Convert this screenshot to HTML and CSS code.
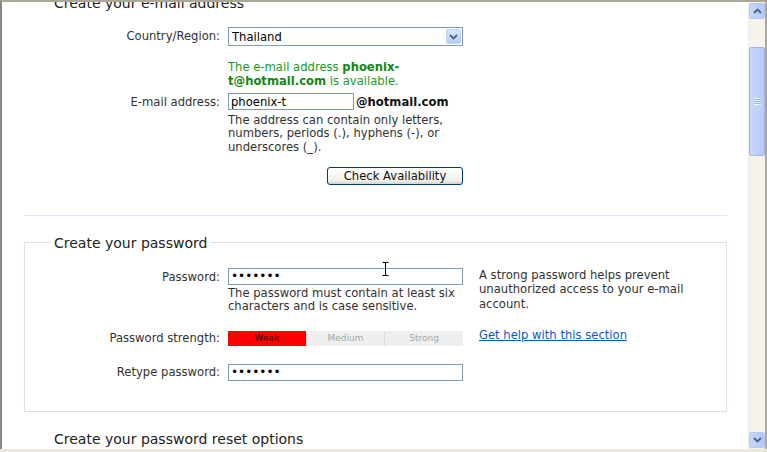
FILE: index.html
```html
<!DOCTYPE html>
<html lang="en">
<head>
  <meta charset="UTF-8">
  <title>Sign up</title>
  <link rel="stylesheet" href="styles.css">
</head>
<body>
  <div class="window">
    <div class="viewport">
      <div class="page">

        <h3 class="section-title">Create your e-mail address</h3>

        <div class="row row-country">
          <label>Country/Region:</label>
          <div class="select">
            <span class="select-value">Thailand</span>
            <span class="select-btn">
              <svg width="9" height="6" viewBox="0 0 9 6"><path d="M1 1 L4.5 4.5 L8 1" fill="none" stroke="#4d6185" stroke-width="1.8"/></svg>
            </span>
          </div>
        </div>

        <div class="row row-msg">
          <span></span>
          <p class="available">The e-mail address <b>phoenix-<br>t@hotmail.com</b> is available.</p>
        </div>

        <div class="row row-email">
          <label>E-mail address:</label>
          <div class="field">
            <div class="email-line">
              <input class="text short" type="text" value="phoenix-t">
              <b class="domain">@hotmail.com</b>
            </div>
            <p class="hint">The address can contain only letters,<br>numbers, periods (.), hyphens (-), or<br>underscores (_).</p>
          </div>
        </div>

        <div class="row row-check">
          <span></span>
          <div class="btn-wrap"><button class="xp-btn">Check Availability</button></div>
        </div>

        <hr class="sep">

        <fieldset class="box">
          <legend>Create your password</legend>

          <div class="row row-pass">
            <label>Password:</label>
            <div class="field">
              <input class="text" type="password" value="1234567">
              <p class="hint">The password must contain at least six<br>characters and is case sensitive.</p>
            </div>
            <p class="side">A strong password helps prevent<br>unauthorized access to your e-mail<br>account.</p>
          </div>

          <div class="row row-strength">
            <label>Password strength:</label>
            <div class="strength">
              <span class="weak">Weak</span>
              <span>Medium</span>
              <span>Strong</span>
            </div>
            <a class="side help" href="#">Get help with this section</a>
          </div>

          <div class="row row-retype">
            <label>Retype password:</label>
            <input class="text" type="password" value="1234567">
          </div>

          <svg class="ibeam" width="7" height="14" viewBox="0 0 7 14"><path d="M0.5 0.5 H6.5 M3.5 0.5 V13.5 M0.5 13.5 H6.5" fill="none" stroke="#000" stroke-width="1"/></svg>
        </fieldset>

        <h3 class="section-title last">Create your password reset options</h3>
      </div>
    </div>

    <div class="scrollbar">
      <div class="sb-btn">
        <svg width="9" height="6" viewBox="0 0 9 6"><path d="M1 5 L4.5 1.5 L8 5" fill="none" stroke="#4d6185" stroke-width="1.8"/></svg>
      </div>
      <div class="sb-track">
        <div class="sb-thumb"><span class="grip"></span></div>
      </div>
      <div class="sb-btn">
        <svg width="9" height="6" viewBox="0 0 9 6"><path d="M1 1 L4.5 4.5 L8 1" fill="none" stroke="#4d6185" stroke-width="1.8"/></svg>
      </div>
    </div>
  </div>
</body>
</html>
```

FILE: styles.css
```css
body {
  margin: 0;
  font-family: "DejaVu Sans", sans-serif;
  font-size: 11.6px;
  color: #333;
  background: #ece9d8;
}

.window {
  display: flex;
  height: 449px;
  border-top: 2px solid #aca899;
  border-left: 2px solid #8c8a80;
  border-right: 2px solid #aca899;
  box-sizing: border-box;
  overflow: hidden;
}

.viewport {
  flex: 1;
  background: white;
  overflow: hidden;
}

.page {
  margin-top: -8px;
  padding: 0 21px 0 22px;
}

.section-title {
  margin: 0;
  padding-left: 30px;
  font-size: 14px;
  font-weight: normal;
  color: #222;
  line-height: 18px;
}

.row {
  display: grid;
  grid-template-columns: 196px 235px 1fr;
  column-gap: 8px;
  align-items: start;
}

.row label {
  text-align: right;
  line-height: 18px;
  white-space: nowrap;
}

.row-country {
  margin-top: 15px;
}

.select {
  display: flex;
  align-items: center;
  height: 19px;
  border: 1px solid #7f9db9;
  box-sizing: border-box;
  padding-left: 3px;
}

.select-value {
  flex: 1;
  color: #000;
}

.select-btn {
  width: 15px;
  height: 15px;
  margin-right: 1px;
  display: flex;
  align-items: center;
  justify-content: center;
  background: linear-gradient(#dbe6fd, #b7cbf6);
  border-radius: 2px;
  border: 1px solid #c3d3fd;
  box-sizing: border-box;
}

.row-msg {
  margin-top: 14px;
}

.available {
  margin: 0;
  color: #229922;
  line-height: 14px;
}

.available b {
  color: #118811;
}

.row-email {
  margin-top: 5px;
}

.email-line {
  display: flex;
  align-items: center;
}

.domain {
  color: #111;
  margin-left: 2px;
}

.text {
  width: 235px;
  height: 17px;
  border: 1px solid #7f9db9;
  box-sizing: border-box;
  padding: 0 2px;
  font-family: inherit;
  font-size: 11.6px;
  color: #000;
  margin: 0;
  display: block;
}

.text.short {
  width: 126px;
}

input[type="password"] {
  font-size: 12px;
}

.hint {
  margin: 4px 0 0;
  line-height: 13.3px;
  color: #333;
  white-space: nowrap;
}

.row-check {
  margin-top: 13px;
}

.btn-wrap {
  display: flex;
  justify-content: flex-end;
}

.xp-btn {
  width: 136px;
  height: 18px;
  padding: 0;
  font-family: inherit;
  font-size: 11.6px;
  color: #111;
  border: 1px solid #003c74;
  border-radius: 3px;
  background: linear-gradient(#ffffff, #f0f0ea 80%, #d6d0c5);
}

.sep {
  margin: 30px 0 0;
  border: none;
  border-top: 1px solid #dde6f3;
}

.box {
  position: relative;
  margin: 19px 0 0;
  padding: 17px 0 30px;
  border: 1px solid #d6e1f2;
  min-width: 0;
}

.box legend {
  margin-left: 26px;
  padding: 0 3px;
  font-size: 14px;
  color: #222;
  line-height: 16px;
}

.box .row {
  grid-template-columns: 195px 235px 1fr;
}

.box .hint {
  margin-top: 2px;
}

.side {
  margin: 0 0 0 8px;
  line-height: 14.5px;
  color: #333;
  white-space: nowrap;
}

.row-strength {
  margin-top: 16px;
  align-items: center;
}

.row-strength .side {
  margin-top: -7px;
}

.strength {
  display: flex;
  height: 15px;
  background: #efefef;
}

.strength span {
  flex: 1;
  text-align: center;
  font-size: 9px;
  line-height: 15px;
  color: #a8a8a8;
  border-left: 1px solid #dcdcdc;
}

.strength span:first-child {
  border-left: none;
}

.strength .weak {
  background: #ff0000;
  color: #300;
}

.help {
  color: #0a58d0;
  text-decoration: underline;
}

.row-retype {
  margin-top: 16px;
  align-items: center;
}

.ibeam {
  position: absolute;
  left: 357px;
  top: 11px;
}

.section-title.last {
  margin-top: 18px;
}

.scrollbar {
  width: 16px;
  display: flex;
  flex-direction: column;
  background: #f4f3ee;
  border-left: 1px solid #eeede5;
}

.sb-btn {
  height: 16px;
  margin: 1px 0;
  display: flex;
  align-items: center;
  justify-content: center;
  background: linear-gradient(90deg, #c6d6fc, #b4c8f6);
  border: 1px solid #b6c8f4;
  border-radius: 2px;
  box-sizing: border-box;
}

.sb-track {
  flex: 1;
  padding-top: 27px;
}

.sb-thumb {
  height: 109px;
  display: flex;
  align-items: center;
  justify-content: center;
  background: linear-gradient(90deg, #c8d7fc, #b8cbf8);
  border: 1px solid #9fb4e8;
  border-radius: 2px;
  box-sizing: border-box;
}

.grip {
  width: 7px;
  height: 7px;
  background: repeating-linear-gradient(#eef3fe 0 1px, #9cb2e4 1px 2px);
}
```
